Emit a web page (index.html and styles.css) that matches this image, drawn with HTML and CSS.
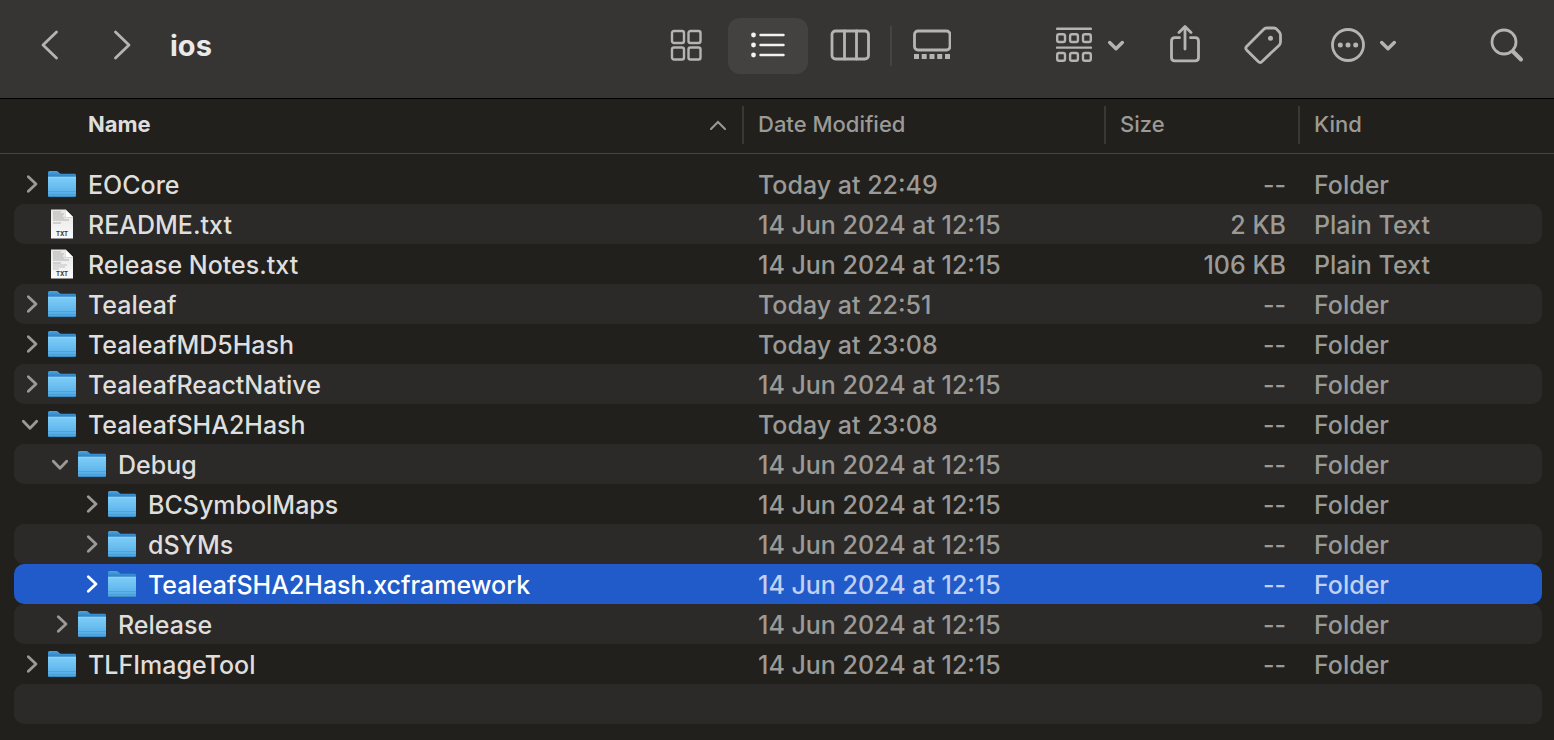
FILE: index.html
```html
<!DOCTYPE html>
<html lang="en">
<head>
<meta charset="utf-8">
<meta name="viewport" content="width=device-width, initial-scale=1">
<title>ios</title>
<link rel="stylesheet" href="styles.css">
</head>
<body>
<svg class="defs" aria-hidden="true">
  <defs>
    <linearGradient id="folder-back" x1="0" y1="0" x2="0" y2="1">
      <stop offset="0" stop-color="#4aa6dd"/><stop offset="0.25" stop-color="#3385c8"/><stop offset="1" stop-color="#3385c8"/>
    </linearGradient>
    <linearGradient id="folder-front" x1="0" y1="0" x2="0" y2="1">
      <stop offset="0" stop-color="#7fcdf8"/><stop offset="0.7" stop-color="#5fb6ec"/><stop offset="1" stop-color="#4da5df"/>
    </linearGradient>
    <linearGradient id="paper" x1="0" y1="0" x2="0" y2="1">
      <stop offset="0" stop-color="#e6e6e6"/><stop offset="1" stop-color="#fafafa"/>
    </linearGradient>
  </defs>
  <symbol id="folder" viewBox="0 0 28 28">
    <path d="M0 2.6Q0 1 1.6 1H8.2Q9.4 1 10.4 1.9L11.8 3.2Q12.5 3.8 13.6 3.8H26.6Q28 3.8 28 5.2V20H0Z" fill="url(#folder-back)"/>
    <path d="M0 7H28V25.4Q28 27 26.4 27H1.6Q0 27 0 25.4Z" fill="url(#folder-front)"/>
    <path d="M0 7.2H28" stroke="#96dcfb" stroke-width=".8"/>
    <path d="M0 21.5H28M0 24.5H28" stroke="#3f92cd" stroke-width=".5"/>
    <path d="M1 26.7H27" stroke="#2f76ad" stroke-width=".7"/>
  </symbol>
  <symbol id="page" viewBox="0 0 28 32">
    <path d="M3 1.5H17.5L25 9V30.5H3Z" fill="url(#paper)"/>
    <path d="M17 1.5L25 9.5H17Z" fill="#c4c4c4"/>
    <path d="M17.5 1.5L25 9H18.6Q17.5 9 17.5 7.9Z" fill="#fff"/>
    <path d="M5 4H13M5 6H16M5 8H15M5 10H16.5M5 12H21M5 15H13" stroke="#a9a9a9" stroke-width=".9"/>
  </symbol>
  <symbol id="closed" viewBox="0 0 24 24">
    <path d="M8.3 4.800L16 12L8.300 19.200"/>
  </symbol>
  <symbol id="open" viewBox="0 0 24 24">
    <path d="M3.300 9.300L10 16.300L16.700 9.300"/>
  </symbol>
  <symbol id="menu-arrow" viewBox="0 0 16 12">
    <path d="M1.700 3.500L8 9.800L14.300 3.500"/>
  </symbol>
</svg>

<main class="window">
  <header class="toolbar">
    <nav class="history">
      <button class="tool" aria-label="Back"><svg width="20" height="32" viewBox="0 0 20 32"><path class="line" d="M17.500 3L4 16L17.500 29"/></svg></button>
      <button class="tool" aria-label="Forward"><svg width="20" height="32" viewBox="0 0 20 32"><path class="line" d="M4.500 3L18 16L4.500 29"/></svg></button>
    </nav>
    <h1 class="title">ios</h1>
    <div class="views">
      <button class="view" aria-label="Icons"><svg width="32" height="32" viewBox="0 0 32 32"><g class="line thin"><rect x="2" y="2" width="12" height="12" rx="2"/><rect x="18.500" y="2" width="12" height="12" rx="2"/><rect x="2" y="18.500" width="12" height="12" rx="2"/><rect x="18.500" y="18.500" width="12" height="12" rx="2"/></g></svg></button>
      <button class="view current" aria-label="List" aria-pressed="true"><svg width="36" height="28" viewBox="0 0 36 28"><g fill="currentColor"><circle cx="3.500" cy="4" r="2.400"/><circle cx="3.500" cy="14" r="2.400"/><circle cx="3.500" cy="24" r="2.400"/></g><path class="line thin" d="M10.500 4H33.500M10.500 14H33.500M10.500 24H33.500"/></svg></button>
      <button class="view" aria-label="Columns"><svg width="40" height="32" viewBox="0 0 40 32"><rect class="line" x="2" y="2" width="36.500" height="28" rx="3.500"/><path class="line" d="M14.500 2V30M26.500 2V30"/></svg></button>
      <span class="divider"></span>
      <button class="view" aria-label="Gallery"><svg width="38" height="32" viewBox="0 0 38 32"><rect class="line" x="1.500" y="2" width="35.500" height="19" rx="3.500"/><path d="M1 25h5v5h-5zM8.700 25h5v5h-5zM16.500 25h5v5h-5zM24.200 25h5v5h-5zM32 25h5v5h-5z" fill="currentColor"/></svg></button>
    </div>
    <div class="actions">
      <button class="tool group" aria-label="Group items"><svg width="36" height="36" viewBox="0 0 36 36"><path class="line thin" d="M1 1.800H35M1 20.600H35"/><g class="line thin"><rect x="1.200" y="7.200" width="7.800" height="7.800" rx="1.800"/><rect x="14.100" y="7.200" width="7.800" height="7.800" rx="1.800"/><rect x="27" y="7.200" width="7.800" height="7.800" rx="1.800"/><rect x="1.200" y="26" width="7.800" height="7.800" rx="1.800"/><rect x="14.100" y="26" width="7.800" height="7.800" rx="1.800"/><rect x="27" y="26" width="7.800" height="7.800" rx="1.800"/></g></svg><svg width="16" height="12"><use href="#menu-arrow"/></svg></button>
      <button class="tool" aria-label="Share"><svg width="30" height="40" viewBox="0 0 30 40"><path class="line" d="M9.500 12.700H4.800Q1.500 12.700 1.500 16V32.500Q1.500 35.800 4.800 35.800H25.200Q28.500 35.800 28.500 32.500V16Q28.500 12.700 25.200 12.700H20.500M15 24V2M9 7.500L15 1.500L21 7.500"/></svg></button>
      <button class="tool" aria-label="Tags"><svg width="40" height="40" viewBox="0 0 40 40"><path class="line" d="M19.500 4.500Q20.800 3 22.800 3H30Q31.500 3 32.600 4.100L35.500 7.300Q36.500 8.500 36.500 10V17Q36.500 18.800 35.200 20.200L17.800 36.700Q16 38.300 14.200 36.600L2.600 24.900Q1 23.200 2.600 21.500Z"/><circle cx="26.500" cy="13.300" r="2.500" fill="currentColor"/></svg></button>
      <button class="tool more" aria-label="More actions"><svg width="36" height="36" viewBox="0 0 36 36"><circle class="line" cx="18" cy="18" r="15.500"/><g fill="currentColor"><circle cx="10.300" cy="18" r="2.500"/><circle cx="18" cy="18" r="2.500"/><circle cx="25.700" cy="18" r="2.500"/></g></svg><svg width="16" height="12"><use href="#menu-arrow"/></svg></button>
    </div>
    <button class="tool search" aria-label="Search"><svg width="34" height="36" viewBox="0 0 34 36"><circle class="line" cx="14" cy="15" r="12"/><path class="line thick" d="M23 24.500L31 32.500"/></svg></button>
  </header>

  <table class="files">
    <thead>
      <tr>
        <th class="sorted" scope="col" aria-sort="ascending"><span>Name</span><svg class="sort" width="16" height="10" viewBox="0 0 16 10"><path d="M1 9L8 2L15 9"/></svg></th>
        <th scope="col">Date Modified</th>
        <th scope="col">Size</th>
        <th scope="col">Kind</th>
      </tr>
    </thead>
    <tbody>
      <tr><td class="name"><button class="toggle" aria-label="Expand EOCore"><svg><use href="#closed"/></svg></button><svg class="icon"><use href="#folder"/></svg><span>EOCore</span></td><td>Today at 22:49</td><td class="size">--</td><td>Folder</td></tr>
      <tr><td class="name"><i class="toggle"></i><svg class="icon page" viewBox="0 0 28 32"><use href="#page"/><text x="14" y="27.500" text-anchor="middle">TXT</text></svg><span>README.txt</span></td><td>14 Jun 2024 at 12:15</td><td class="size">2 KB</td><td>Plain Text</td></tr>
      <tr><td class="name"><i class="toggle"></i><svg class="icon page" viewBox="0 0 28 32"><use href="#page"/><path d="M5 17H19M5 19H17M5 21H11" stroke="#b5b5b5" stroke-width=".8"/><text x="14" y="27.500" text-anchor="middle">TXT</text></svg><span>Release Notes.txt</span></td><td>14 Jun 2024 at 12:15</td><td class="size">106 KB</td><td>Plain Text</td></tr>
      <tr><td class="name"><button class="toggle" aria-label="Expand Tealeaf"><svg><use href="#closed"/></svg></button><svg class="icon"><use href="#folder"/></svg><span>Tealeaf</span></td><td>Today at 22:51</td><td class="size">--</td><td>Folder</td></tr>
      <tr><td class="name"><button class="toggle" aria-label="Expand TealeafMD5Hash"><svg><use href="#closed"/></svg></button><svg class="icon"><use href="#folder"/></svg><span>TealeafMD5Hash</span></td><td>Today at 23:08</td><td class="size">--</td><td>Folder</td></tr>
      <tr><td class="name"><button class="toggle" aria-label="Expand TealeafReactNative"><svg><use href="#closed"/></svg></button><svg class="icon"><use href="#folder"/></svg><span>TealeafReactNative</span></td><td>14 Jun 2024 at 12:15</td><td class="size">--</td><td>Folder</td></tr>
      <tr><td class="name"><button class="toggle" aria-label="Collapse TealeafSHA2Hash"><svg><use href="#open"/></svg></button><svg class="icon"><use href="#folder"/></svg><span>TealeafSHA2Hash</span></td><td>Today at 23:08</td><td class="size">--</td><td>Folder</td></tr>
      <tr><td class="name level-1"><button class="toggle" aria-label="Collapse Debug"><svg><use href="#open"/></svg></button><svg class="icon"><use href="#folder"/></svg><span>Debug</span></td><td>14 Jun 2024 at 12:15</td><td class="size">--</td><td>Folder</td></tr>
      <tr><td class="name level-2"><button class="toggle" aria-label="Expand BCSymbolMaps"><svg><use href="#closed"/></svg></button><svg class="icon"><use href="#folder"/></svg><span>BCSymbolMaps</span></td><td>14 Jun 2024 at 12:15</td><td class="size">--</td><td>Folder</td></tr>
      <tr><td class="name level-2"><button class="toggle" aria-label="Expand dSYMs"><svg><use href="#closed"/></svg></button><svg class="icon"><use href="#folder"/></svg><span>dSYMs</span></td><td>14 Jun 2024 at 12:15</td><td class="size">--</td><td>Folder</td></tr>
      <tr class="selected"><td class="name level-2"><button class="toggle" aria-label="Expand TealeafSHA2Hash.xcframework"><svg><use href="#closed"/></svg></button><svg class="icon"><use href="#folder"/></svg><span>TealeafSHA2Hash.xcframework</span></td><td>14 Jun 2024 at 12:15</td><td class="size">--</td><td>Folder</td></tr>
      <tr><td class="name level-1"><button class="toggle" aria-label="Expand Release"><svg><use href="#closed"/></svg></button><svg class="icon"><use href="#folder"/></svg><span>Release</span></td><td>14 Jun 2024 at 12:15</td><td class="size">--</td><td>Folder</td></tr>
      <tr><td class="name"><button class="toggle" aria-label="Expand TLFImageTool"><svg><use href="#closed"/></svg></button><svg class="icon"><use href="#folder"/></svg><span>TLFImageTool</span></td><td>14 Jun 2024 at 12:15</td><td class="size">--</td><td>Folder</td></tr>
      <tr><td></td><td></td><td></td><td></td></tr>
    </tbody>
  </table>
</main>
</body>
</html>
```

FILE: styles.css
```css
* {
  box-sizing: border-box;
}

body {
  margin: 0;
  background: #21201c;
  color: #dfdedc;
  font-family: Inter, "Liberation Sans", sans-serif;
  font-size: 25px;
}

.defs {
  position: absolute;
  width: 0;
  height: 0;
}

button {
  display: flex;
  align-items: center;
  justify-content: center;
  padding: 0;
  border: 0;
  background: none;
  color: inherit;
  font: inherit;
}

svg {
  display: block;
  flex: none;
}

.line,
#menu-arrow path,
#closed path,
#open path {
  fill: none;
  stroke: currentColor;
  stroke-width: 2.8;
  stroke-linecap: round;
  stroke-linejoin: round;
}

#menu-arrow path {
  stroke-width: 3.4;
}

.line.thin {
  stroke-width: 2.4;
}

.line.thick {
  stroke-width: 4;
}

/* Toolbar */

.toolbar {
  display: flex;
  align-items: center;
  padding: 18px 30px 24px 14px;
  background: #363533;
  border-bottom: 1px solid #000;
  color: #b5b4b2;
}

.tool,
.view {
  height: 56px;
  padding-bottom: 2px;
}

.history {
  display: flex;
  gap: 2px;
}

.history .tool {
  width: 70px;
}

.title {
  flex: 1;
  margin: 0 0 0 14px;
  padding-bottom: 1px;
  color: #ebeae9;
  font-size: 29px;
  font-weight: 700;
  line-height: 36px;
}

.views {
  display: flex;
  align-items: center;
}

.view {
  width: 80px;
  margin-right: 2px;
  border-radius: 12px;
}

.view:last-child {
  margin-right: 0;
}

.view.current {
  background: #434240;
  color: #f3f2f1;
}

.divider {
  width: 2px;
  height: 40px;
  margin-left: -2px;
  background: #454442;
}

.actions {
  display: flex;
  align-items: center;
  gap: 44px;
  margin-left: 84px;
}

.group {
  gap: 16px;
  margin-right: 2px;
}

.more {
  gap: 14px;
  margin-left: 2px;
}

.search {
  margin-left: 94px;
}

/* File list */

.files {
  display: block;
}

.files thead,
.files tbody {
  display: block;
}

.files thead {
  padding: 7px 12px 9px 14px;
  border-bottom: 1px solid #454441;
}

.files tbody {
  padding: 10px 12px 16px 14px;
}

.files tr {
  display: grid;
  grid-template-columns: minmax(0, 1fr) 362px 194px 244px;
}

.files thead tr {
  height: 38px;
}

th {
  padding: 0 14px;
  border-left: 2px solid #393835;
  color: #9b9a97;
  font-size: 22px;
  font-weight: 500;
  line-height: 36px;
  text-align: left;
}

th.sorted {
  display: flex;
  justify-content: space-between;
  padding: 0 16px 0 74px;
  border-left: 0;
  color: #dfdedc;
  font-weight: 700;
}

.sort {
  align-self: center;
  fill: none;
  stroke: #9b9a97;
  stroke-width: 2;
  stroke-linecap: round;
}

.files tbody tr {
  height: 40px;
  border-radius: 10px;
}

.files tbody tr:nth-child(even) {
  background: #2b2a28;
}

td {
  height: 40px;
  padding: 2px 12px 0 16px;
  color: #9b9a97;
  font-weight: 500;
  line-height: 38px;
  white-space: nowrap;
}

td.size {
  text-align: right;
}

td.name {
  display: flex;
  align-items: center;
  padding: 0 0 0 6px;
  color: #dfdedc;
}

td.name span {
  padding-top: 2px;
}

td.level-1 {
  padding-left: 36px;
}

td.level-2 {
  padding-left: 66px;
}

.toggle {
  width: 24px;
  height: 24px;
  margin-right: 4px;
  color: #9b9a97;
}

.toggle svg {
  width: 24px;
  height: 24px;
}

.icon {
  width: 28px;
  height: 28px;
  margin-right: 12px;
}

.icon.page {
  height: 32px;
}

.icon text {
  fill: #333;
  font-size: 6px;
  font-weight: 700;
}

.files tbody tr.selected {
  background: #205bc9;
}

.selected td {
  color: #c2d1f1;
}

.selected td.name,
.selected .toggle {
  color: #fff;
}
```
